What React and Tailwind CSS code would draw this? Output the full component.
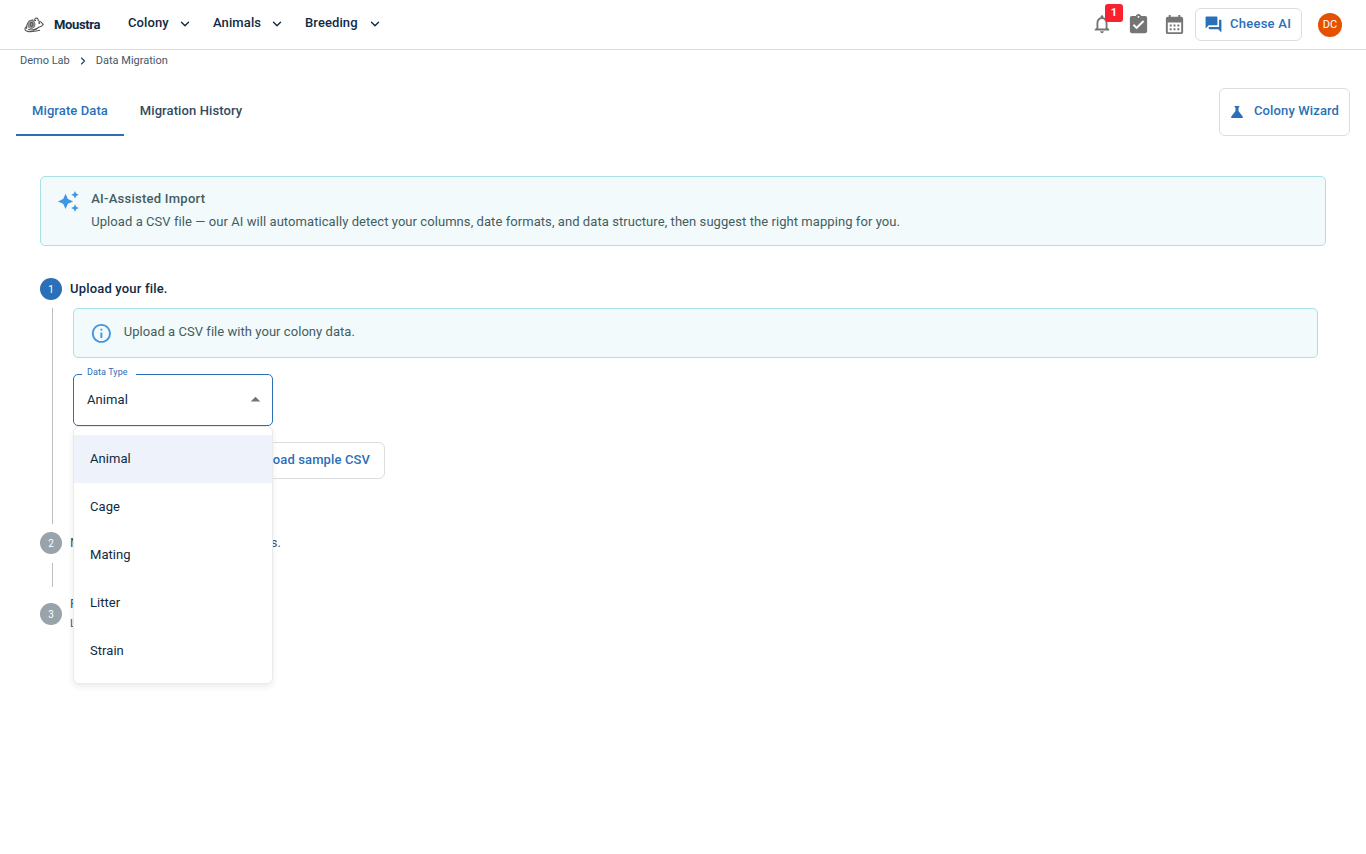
import React, { useState } from 'react';
import {
  MdNotificationsNone, MdAssignmentTurnedIn, MdCalendarMonth, MdForum,
  MdScience, MdAutoAwesome, MdInfoOutline, MdArrowDropUp,
} from 'react-icons/md';
import { ChevronDown, ChevronRight } from 'lucide-react';

const navItems = [
  { label: 'Colony', width: 'w-[85px]' },
  { label: 'Animals', width: 'w-[92px]' },
  { label: 'Breeding', width: 'w-[98px]' },
];

const dataTypes = ['Animal', 'Cage', 'Mating', 'Litter', 'Strain'];

const MouseLogo = () => (
  <svg viewBox="0 0 20 16" className="w-5 h-4" fill="none" stroke="#555" strokeWidth="1.1">
    <path d="M2.6 11.8C1.8 7 5.2 2.8 9 3c1.200 0 2.200.3 3 .8M11 3.400c-.6-1.600.4-2.600 1.600-2.300 1.200.2 1.800 1.200 1.500 2.400M13.600 3.500c2.600.6 4.600 2.200 5.600 3.900-.8 1.500-2.400 2.300-4.300 2.900-1.300 1-3.100 2.300-6 2.800" />
    <ellipse cx="7.4" cy="7.4" rx="3.5" ry="4" fill="#a0a0a0" stroke="#777" />
    <ellipse cx="7.6" cy="7.5" rx="1.3" ry="1.9" />
    <path d="M2.8 9.2C.2 11 .2 13.800 3.600 14.400c4.200.7 8.800-.3 12.400-1.200M4 12.300c2.400.8 6 .7 8.600-.2" />
    <circle cx="15.3" cy="6" r=".4" fill="#333" />
  </svg>
);

const StepIcon = ({ number, active }) => (
  <span className={`w-[22px] h-[22px] rounded-full flex items-center justify-center shrink-0 text-[10px] text-white ${active ? 'bg-[#2a70b8]' : 'bg-[#99a3ab]'}`}>
    {number}
  </span>
);

const App = () => {
  const [selected, setSelected] = useState('Animal');

  return (
    <div className="min-h-screen bg-white font-['Roboto','Noto_Sans',sans-serif] text-[13px] text-[#102a43]">
      <header className="h-[50px] border-b border-[#dcdddf] flex items-center px-6">
        <MouseLogo />
        <span className="ml-[10px] w-[74px] font-bold tracking-[-0.35px]">Moustra</span>
        <nav className="flex -mt-[3px]">
          {navItems.map((item) => (
            <button key={item.label} className={`${item.width} pr-[21px] flex items-center justify-between`}>
              <span className="font-medium tracking-[0.1px]">{item.label}</span>
              <ChevronDown className="w-3.5 h-3.5 mt-0.5" strokeWidth={2.4} />
            </button>
          ))}
        </nav>
        <div className="ml-auto flex items-center">
          <button className="relative text-[#757575]">
            <MdNotificationsNone className="w-[22px] h-[22px] -mt-px" />
            <span className="absolute -top-[10px] left-[14px] w-[18px] h-[18px] rounded-[3px] bg-[#f9202f] text-white text-[11px] font-bold flex items-center justify-center pt-px">1</span>
          </button>
          <MdAssignmentTurnedIn className="ml-[14px] -mt-px w-[23px] h-[23px] text-[#757575]" />
          <MdCalendarMonth className="ml-[13px] -mt-px w-[23px] h-[23px] text-[#757575]" />
          <button className="ml-[9px] w-[107px] h-[33px] border border-[#dadde2] rounded-md flex items-center pl-2 gap-[7px] text-[#2a70b8] font-medium tracking-[0.25px]">
            <MdForum className="w-[19px] h-[19px]" />
            <span className="pb-0.5">Cheese AI</span>
          </button>
          <span className="ml-4 w-6 h-6 rounded-full bg-[#e65100] text-white text-[11px] flex items-center justify-center pt-px">DC</span>
        </div>
      </header>

      <div className="h-[22px] pl-5 flex items-center text-[11px] text-[#44576a]">
        <span>Demo Lab</span>
        <ChevronRight className="mx-[7px] w-3 h-3 text-[#243b53]" strokeWidth={2.2} />
        <span>Data Migration</span>
      </div>

      <div className="mt-4 px-4 flex justify-between">
        <div className="flex font-medium tracking-[0.1px]">
          <button className="w-[108px] h-12 border-b-2 border-[#2a70b8] text-[#2a70b8]">Migrate Data</button>
          <button className="w-[134px] h-12 pb-0.5 text-[#334a5e]">Migration History</button>
        </div>
        <button className="w-[131px] h-12 border border-[#dadde2] rounded-md flex items-center pl-2 gap-2 text-[#2a70b8] font-medium tracking-[0.12px]">
          <MdScience className="w-[18px] h-[18px]" />
          <span className="pb-0.5">Colony Wizard</span>
        </button>
      </div>

      <main className="px-10 pt-10">
        <div className="h-[70px] border border-[#a9e0e8] bg-[#f2fafc] rounded-[5px] flex pl-4 pt-[13px] text-[#435d60]">
          <MdAutoAwesome className="w-[22.75px] h-[22.75px] text-[#4196e3]" />
          <div className="ml-[11.5px]">
            <p className="font-medium leading-[18px] tracking-[0.25px]">AI-Assisted Import</p>
            <p className="mt-[5px] leading-[18px] tracking-[0.065px]">Upload a CSV file — our AI will automatically detect your columns, date formats, and data structure, then suggest the right mapping for you.</p>
          </div>
        </div>

        <div className="mt-8">
          <div className="flex items-center gap-2 h-[22px]">
            <StepIcon number={1} active />
            <span className="font-medium tracking-[0.18px]">Upload your file.</span>
          </div>

          <div className="mt-2 ml-3 mr-2 h-[216px] border-l border-[#bdbdbd] pl-5">
            <div className="h-[50px] border border-[#a9e0e8] bg-[#f2fafc] rounded-[5px] flex items-center pl-4 text-[#435d60]">
              <MdInfoOutline className="w-[22.75px] h-[22.75px] text-[#4196e3]" />
              <span className="ml-[11px] pb-0.5 tracking-[0.05px]">Upload a CSV file with your colony data.</span>
            </div>

            <div className="relative mt-4 w-[200px] h-[52px] border border-[#2a70b8] rounded-[5px] flex items-center justify-between pl-[13px] pr-[5px]">
              <span className="absolute -top-[9px] left-2 bg-white pl-[5px] w-[54px] text-[9px] tracking-[0.1px] text-[#2a70b8]">Data Type</span>
              <span className="tracking-[0.1px]">{selected}</span>
              <MdArrowDropUp className="w-[23px] h-[23px] -mt-px text-[#757575]" />

              {/* Options list, opens under the field */}
              <ul className="absolute z-10 top-[51px] -left-px w-[200px] h-[258px] py-2 bg-white rounded-md border border-[#e9eaec] shadow-[0_3px_6px_rgba(0,0,0,0.08)]">
                {dataTypes.map((type) => (
                  <li key={type} onClick={() => setSelected(type)} className={`h-12 pl-4 flex items-center tracking-[0.05px] ${type === selected ? 'bg-[#edf2fb]' : ''}`}>
                    {type}
                  </li>
                ))}
              </ul>
            </div>

            <div className="mt-4 flex gap-2 text-[#2a70b8] font-medium tracking-[0.12px]">
              <button className="w-[120px] h-[37px] border border-[#dadde2] rounded-md">Upload CSV</button>
              <button className="w-[184px] h-[37px] border border-[#dadde2] rounded-md pr-[14px] pb-0.5 text-right">Download sample CSV</button>
            </div>
          </div>

          <div className="mt-2 flex items-center gap-2 h-[22px] text-[#44576a]">
            <StepIcon number={2} />
            <span className="w-[211px] flex justify-between whitespace-nowrap">
              <span>Map your columns to</span>
              <span>colony fields.</span>
            </span>
          </div>
          <div className="mt-[9px] ml-3 h-6 border-l border-[#bdbdbd]" />
          <div className="mt-2 flex items-center gap-2 h-[38px] text-[#44576a]">
            <StepIcon number={3} />
            <div>
              <p className="leading-[18px]">Review</p>
              <p className="text-[11px] leading-[18px] mt-0.5">Last step</p>
            </div>
          </div>
        </div>
      </main>
    </div>
  );
};

export default App;
